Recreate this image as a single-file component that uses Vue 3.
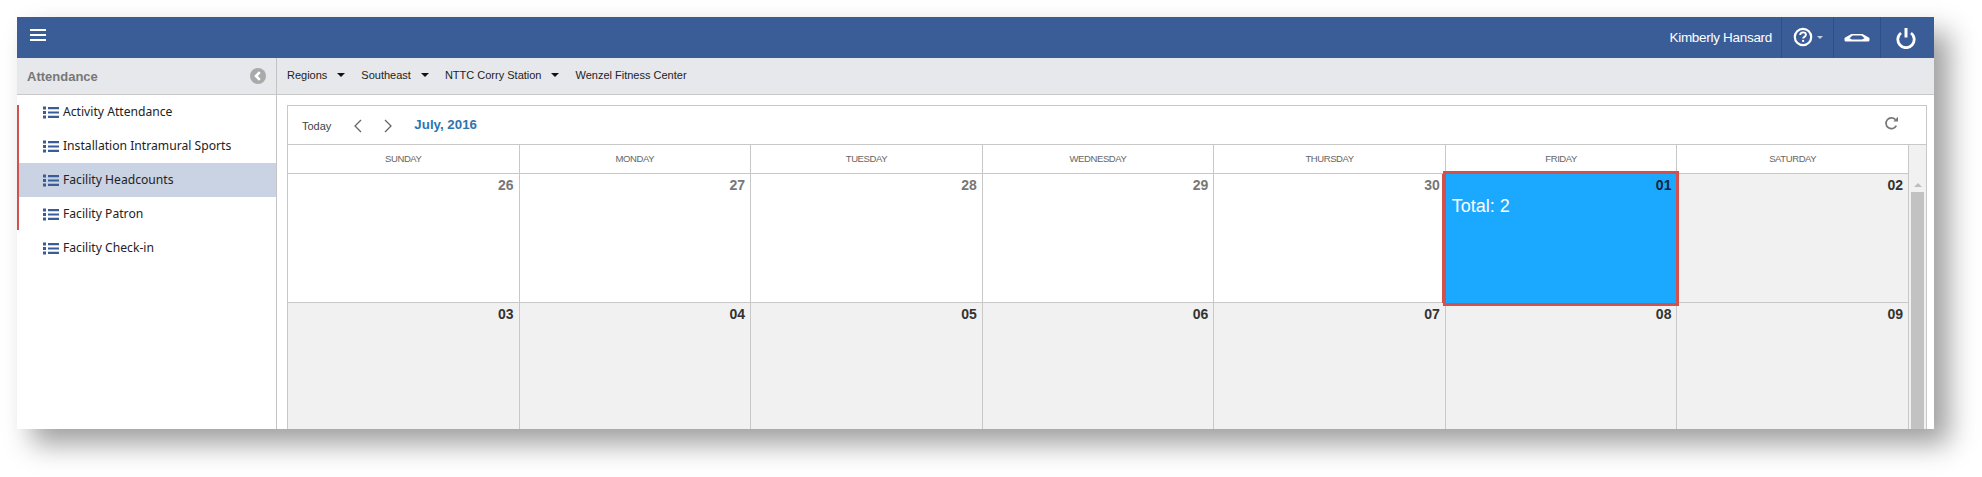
<script setup>
const nav = [
  { label: 'Activity Attendance' },
  { label: 'Installation Intramural Sports' },
  { label: 'Facility Headcounts', active: true },
  { label: 'Facility Patron' },
  { label: 'Facility Check-in' }
]
const crumbs = [
  { label: 'Regions', caret: true },
  { label: 'Southeast', caret: true },
  { label: 'NTTC Corry Station', caret: true },
  { label: 'Wenzel Fitness Center' }
]
const days = ['Sunday', 'Monday', 'Tuesday', 'Wednesday', 'Thursday', 'Friday', 'Saturday']
const weeks = [
  [
    { n: '26', muted: true }, { n: '27', muted: true }, { n: '28', muted: true },
    { n: '29', muted: true }, { n: '30', muted: true }, { n: '01', selected: true, total: 'Total: 2' },
    { n: '02', shade: true }
  ],
  ['03', '04', '05', '06', '07', '08', '09'].map(n => ({ n, shade: true }))
]
</script>

<template>
  <div class="page">
    <div class="window">
      <header class="topbar">
        <svg class="burger" width="16" height="12" viewBox="0 0 16 12"><path d="M0 1h16M0 6h16M0 11h16" stroke="#fff" stroke-width="2" /></svg>
        <div class="top-right">
          <span class="user">Kimberly Hansard</span>
          <div class="top-btn help">
            <svg width="20" height="20" viewBox="0 0 20 20"><circle cx="10" cy="10" r="8.2" fill="none" stroke="#fff" stroke-width="2.2" /><path d="M7.2 8c0-1.8 1.3-2.6 2.9-2.6 1.6 0 2.8.9 2.8 2.3 0 2.1-2.8 2.2-2.8 3.9" fill="none" stroke="#fff" stroke-width="1.9" /><rect x="9.1" y="12.9" width="2" height="2" fill="#fff" /></svg>
            <i class="mini-caret"></i>
          </div>
          <div class="top-btn phone">
            <svg width="26" height="9" viewBox="0 0 26 9"><path fill-rule="evenodd" d="M.5 7V5.500Q.5 4.800 1.200 4.400L7.500 1H18.500L24.800 4.400Q25.500 4.800 25.500 5.500V7Q25.500 8.500 24 8.500H2Q.5 8.500 .5 7zM5.500 5.300L8.500 2.500H17.500L20.500 5.300L18 6.600H8z" fill="#fff" /></svg>
          </div>
          <div class="top-btn power">
            <svg width="22" height="22" viewBox="0 0 22 22"><path d="M6 6a8.200 8.200 0 1 0 10 0" fill="none" stroke="#fff" stroke-width="2.800" /><path d="M11 1v9.500" stroke="#fff" stroke-width="3" /></svg>
          </div>
        </div>
      </header>
      <div class="body">
        <aside class="sidebar">
          <div class="side-head">
            <span>Attendance</span>
            <svg width="16" height="16" viewBox="0 0 16 16"><circle cx="8" cy="8" r="8" fill="#aaa" /><path d="M9.800 4.200L6 8l3.800 3.800" fill="none" stroke="#fff" stroke-width="2.600" /></svg>
          </div>
          <nav class="nav">
            <i class="red-rail"></i>
            <a v-for="item in nav" :key="item.label" class="nav-item" :class="{ active: item.active }">
              <svg width="16" height="13" viewBox="0 0 16 13"><path d="M0 .5h3v3H0zM0 5h3v3H0zM0 9.500h3v3H0zM5 1h11v2.200H5zM5 5.400h11v2.200H5zM5 9.800h11V12H5z" fill="#3a5d98" /></svg>
              <span class="nav-label">{{ item.label }}</span>
            </a>
          </nav>
        </aside>
        <main class="main">
          <div class="crumbs">
            <span v-for="c in crumbs" :key="c.label" class="crumb">
              {{ c.label }}<i v-if="c.caret" class="caret"></i>
            </span>
          </div>
          <div class="content">
            <section class="calendar">
              <div class="toolbar">
                <span class="today">Today</span>
                <svg class="chev" width="9" height="14" viewBox="0 0 9 14"><path d="M8 1L2 7l6 6" fill="none" stroke="#666" stroke-width="1.300" /></svg>
                <svg class="chev" width="9" height="14" viewBox="0 0 9 14"><path d="M1 1l6 6-6 6" fill="none" stroke="#666" stroke-width="1.300" /></svg>
                <span class="month">July, 2016</span>
                <svg class="reload" width="15" height="15" viewBox="0 0 15 15"><path d="M12.300 9.600A5.400 5.400 0 1 1 11.400 3.600" fill="none" stroke="#777" stroke-width="1.700" /><path d="M9.300 5.400h4.700V.7z" fill="#777" /></svg>
              </div>
              <div class="grid-wrap">
                <div class="grid">
                  <div class="dow-row">
                    <div v-for="d in days" :key="d" class="dow">{{ d }}</div>
                  </div>
                  <div v-for="(w, i) in weeks" :key="i" class="week">
                    <div v-for="c in w" :key="c.n" class="cell" :class="{ shade: c.shade, selected: c.selected }">
                      <span class="num" :class="{ muted: c.muted }">{{ c.n }}</span>
                      <span v-if="c.total" class="total">{{ c.total }}</span>
                    </div>
                  </div>
                </div>
                <div class="scroll">
                  <i class="scroll-up"></i>
                  <div class="thumb"></div>
                </div>
              </div>
            </section>
          </div>
        </main>
      </div>
    </div>
  </div>
</template>

<style>
html, body { margin: 0; background: #fff; overflow: hidden; }
</style>

<style scoped>
.page {
  width: 1982px;
  height: 477px;
  padding: 17px 48px 48px 17px;
  box-sizing: border-box;
  overflow: hidden;
  font-family: "Liberation Sans", Arial, sans-serif;
}
.window {
  width: 1917px;
  height: 412px;
  display: flex;
  flex-direction: column;
  background: #fff;
  box-shadow: 15px 15px 26px rgba(0, 0, 0, .38);
  overflow: hidden;
}
.topbar {
  height: 41px;
  flex: none;
  background: #3a5d98;
  display: flex;
  align-items: center;
  justify-content: space-between;
  color: #fff;
}
.burger { margin-left: 13px; margin-top: -6px; }
.top-right { display: flex; height: 100%; align-items: center; }
.user { font-size: 13.500px; margin-right: 9px; letter-spacing: -.3px; }
.top-btn {
  height: 100%;
  display: flex;
  align-items: center;
  justify-content: center;
  border-left: 1px solid #2f5087;
  box-sizing: border-box;
}
.help { width: 52px; gap: 4px; padding-left: 1px; padding-bottom: 1px; }
.phone { width: 47px; }
.power { width: 54px; padding-right: 3px; }
.mini-caret {
  width: 0; height: 0;
  border: 3.500px solid transparent;
  border-top: 3.500px solid #c5d0e2;
  border-bottom: 0;
}
.body { flex: 1; display: flex; min-height: 0; }
.sidebar {
  width: 260px;
  flex: none;
  box-sizing: border-box;
  border-right: 1px solid #c4c4c4;
  display: flex;
  flex-direction: column;
}
.side-head {
  height: 37px;
  box-sizing: border-box;
  flex: none;
  background: #e7e8ec;
  border-bottom: 1px solid #c8c8c8;
  display: flex;
  align-items: center;
  justify-content: space-between;
  padding: 0 10px 0 10px;
  font-size: 13px;
  font-weight: bold;
  color: #777;
}
.nav { position: relative; padding-top: 0; }
.red-rail {
  position: absolute;
  left: 0;
  top: 10px;
  width: 2px;
  height: 125px;
  background: #d2504e;
  z-index: 1;
}
.nav-item {
  height: 34px;
  display: flex;
  align-items: center;
  gap: 4px;
  padding-left: 26px;
  font-family: "Noto Sans", sans-serif;
  font-size: 12.150px;
  color: #222;
}
.nav-label { margin-top: -2px; }
.nav-item.active { background: #cad3e3; margin-left: 2px; padding-left: 24px; }
.main { flex: 1; min-width: 0; display: flex; flex-direction: column; }
.crumbs {
  height: 37px;
  flex: none;
  box-sizing: border-box;
  background: #e7e8ec;
  border-bottom: 1px solid #c8c8c8;
  display: flex;
  align-items: center;
  padding: 0 0 2px 10px;
  font-size: 11px;
  color: #222;
}
.crumb { display: flex; align-items: center; white-space: nowrap; margin-right: 16px; }
.caret {
  width: 0; height: 0;
  margin-left: 10px;
  border: 4px solid transparent;
  border-top: 4px solid #111;
  border-bottom: 0;
}
.content { flex: 1; min-height: 0; padding: 10px 7px 0 10px; display: flex; }
.calendar {
  flex: 1;
  min-width: 0;
  box-sizing: border-box;
  border: 1px solid #c8c8c8;
  border-bottom: 0;
  display: flex;
  flex-direction: column;
}
.toolbar {
  height: 38px;
  flex: none;
  border-bottom: 1px solid #c8c8c8;
  display: flex;
  align-items: center;
  padding: 0 27px 0 14px;
  font-size: 11px;
}
.today { color: #444; margin-right: 22px; margin-top: 2px; }
.chev { margin-right: 22px; margin-top: 2px; }
.month { font-size: 13.300px; font-weight: bold; color: #2e75b0; margin-left: -1px; margin-top: -2px; }
.reload { margin-left: auto; margin-top: -3px; }
.grid-wrap { flex: 1; min-height: 0; display: flex; background: #f1f1f1; }
.grid { width: 1621px; flex: none; display: flex; flex-direction: column; }
.dow-row, .week { display: grid; grid-template-columns: repeat(7, 1fr); flex: none; }
.dow-row { height: 29px; background: #fff; box-sizing: border-box; border-bottom: 1px solid #c8c8c8; }
.dow {
  display: flex;
  align-items: center;
  justify-content: center;
  text-transform: uppercase;
  font-size: 9.500px;
  letter-spacing: -.4px;
  color: #666;
  border-right: 1px solid #c8c8c8;
  padding-bottom: 2px;
}
.week { height: 129px; }
.cell {
  position: relative;
  box-sizing: border-box;
  background: #fff;
  border-right: 1px solid #c8c8c8;
  border-bottom: 1px solid #c8c8c8;
  display: flex;
  flex-direction: column;
  align-items: flex-end;
  padding: 3px 5px 0 0;
}
.cell.shade { background: #f1f1f1; }
.cell.selected {
  background: #1aa9ff;
  border: 0;
  outline: 3px solid #d2504e;
  box-shadow: -4px 0 0 #d2504e;
  z-index: 1;
  margin-right: 1px;
}
.num { font-size: 14px; font-weight: bold; line-height: 16px; color: #333; }
.selected .num { color: #16233a; }
.num.muted { color: #777; font-weight: bold; }
.total {
  align-self: flex-start;
  margin: 2px 0 0 6px;
  font-size: 18px;
  line-height: 22px;
  color: #fff;
}
.scroll { flex: 1; position: relative; display: flex; flex-direction: column; align-items: center; }
.scroll-up {
  margin-top: 38px;
  width: 0; height: 0;
  border: 4px solid transparent;
  border-bottom: 4px solid #bdbdbd;
  border-top: 0;
}
.thumb { width: 13px; margin-top: 5px; flex: 1; background: #c2c2c2; }
</style>
